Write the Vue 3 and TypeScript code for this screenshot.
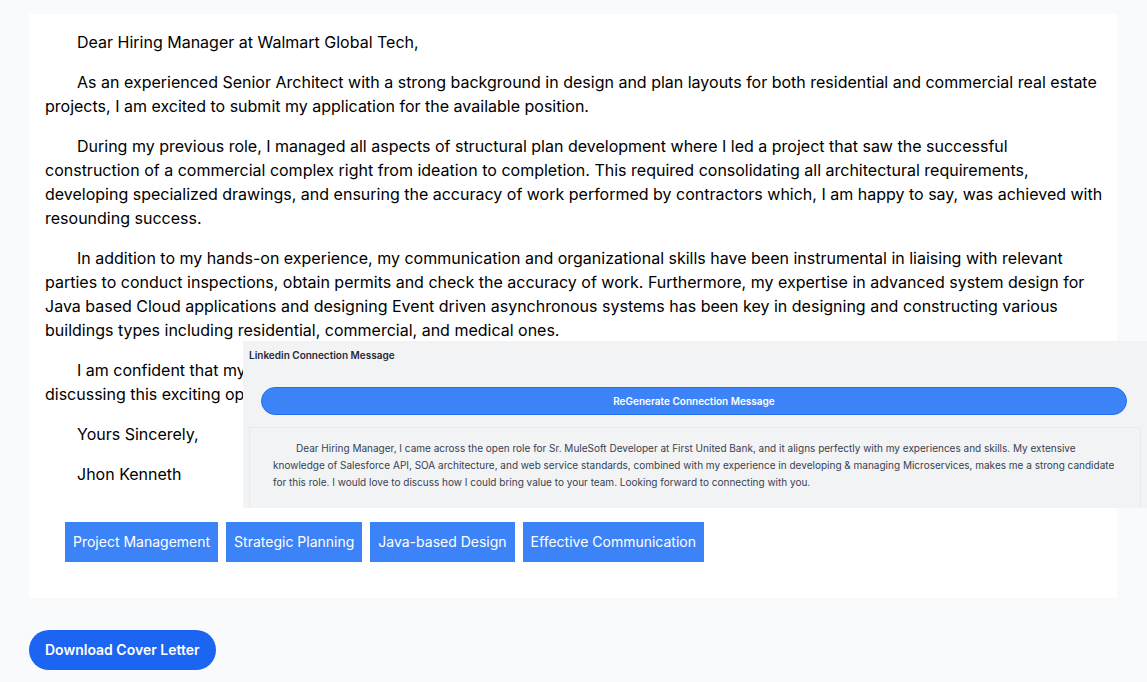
<script setup lang="ts">
const paragraphs: string[] = [
  'Dear Hiring Manager at Walmart Global Tech,',
  'As an experienced Senior Architect with a strong background in design and plan layouts for both residential and commercial real estate projects, I am excited to submit my application for the available position.',
  'During my previous role, I managed all aspects of structural plan development where I led a project that saw the successful construction of a commercial complex right from ideation to completion. This required consolidating all architectural requirements, developing specialized drawings, and ensuring the accuracy of work performed by contractors which, I am happy to say, was achieved with resounding success.',
  'In addition to my hands-on experience, my communication and organizational skills have been instrumental in liaising with relevant parties to conduct inspections, obtain permits and check the accuracy of work. Furthermore, my expertise in advanced system design for Java based Cloud applications and designing Event driven asynchronous systems has been key in designing and constructing various buildings types including residential, commercial, and medical ones.',
  'I am confident that my skills and experience make me a strong candidate for this role within your company, and I look forward to discussing this exciting opportunity with you.',
  'Yours Sincerely,',
  'Jhon Kenneth',
]

const skills: string[] = [
  'Project Management',
  'Strategic Planning',
  'Java-based Design',
  'Effective Communication',
]

const connectionMessage =
  'Dear Hiring Manager, I came across the open role for Sr. MuleSoft Developer at First United Bank, and it aligns perfectly with my experiences and skills. My extensive knowledge of Salesforce API, SOA architecture, and web service standards, combined with my experience in developing & managing Microservices, makes me a strong candidate for this role. I would love to discuss how I could bring value to your team. Looking forward to connecting with you.'
</script>

<template>
  <main class="page">
    <article class="letter">
      <p v-for="text in paragraphs" :key="text">{{ text }}</p>
      <ul class="skills">
        <li v-for="skill in skills" :key="skill">{{ skill }}</li>
      </ul>
    </article>
    <button type="button" class="download">Download Cover Letter</button>

    <section class="connection" aria-labelledby="connection-title">
      <h2 id="connection-title">Linkedin Connection Message</h2>
      <button type="button" class="regenerate">ReGenerate Connection Message</button>
      <div class="message">
        <p>{{ connectionMessage }}</p>
      </div>
    </section>
  </main>
</template>

<style>
body {
  margin: 0;
  background: #f9fafc;
}
</style>

<style scoped>
.page {
  position: relative;
  box-sizing: border-box;
  min-height: 100vh;
  padding: 14px 30px 12px 29px;
  font-family: Inter, "Liberation Sans", sans-serif;
  color: #000;
}

.letter {
  padding: 16px 12px 36px 16px;
  background: #fff;
  font-size: 16px;
  line-height: 24px;
}

.letter p {
  margin: 0 0 16px;
  text-indent: 32px;
}

.skills {
  display: flex;
  flex-wrap: wrap;
  gap: 8px;
  margin: 0;
  padding: 20px 20px 0;
  list-style: none;
}

.skills li {
  padding: 8px;
  background: #3d83f8;
  color: #fff;
  font-size: 14px;
}

button {
  border: 0;
  font-family: inherit;
  font-weight: 600;
  color: #fff;
}

.download {
  margin-top: 32px;
  padding: 10px 16px;
  border-radius: 20px;
  background: #1c64f2;
  font-size: 14px;
  line-height: 20px;
}

.connection {
  position: absolute;
  top: 341px;
  right: 0;
  left: 243px;
  padding: 6px 6px 0;
  background: #f2f3f5;
}

.connection h2 {
  margin: 0;
  font-size: 10px;
  font-weight: 600;
  line-height: 16px;
  color: #1f2937;
}

.regenerate {
  display: block;
  width: calc(100% - 26px);
  margin: 24px 14px 12px 12px;
  padding: 5px 16px;
  border: 1px solid #2270f5;
  border-radius: 14px;
  background: #3d83f8;
  font-size: 10px;
  line-height: 16px;
}

.message {
  padding: 12px 16px 17px 23px;
  border: 1px solid #e8eaed;
  border-bottom: 0;
}

.message p {
  margin: 0;
  font-size: 10px;
  line-height: 17px;
  text-indent: 23px;
  color: #374151;
}
</style>
